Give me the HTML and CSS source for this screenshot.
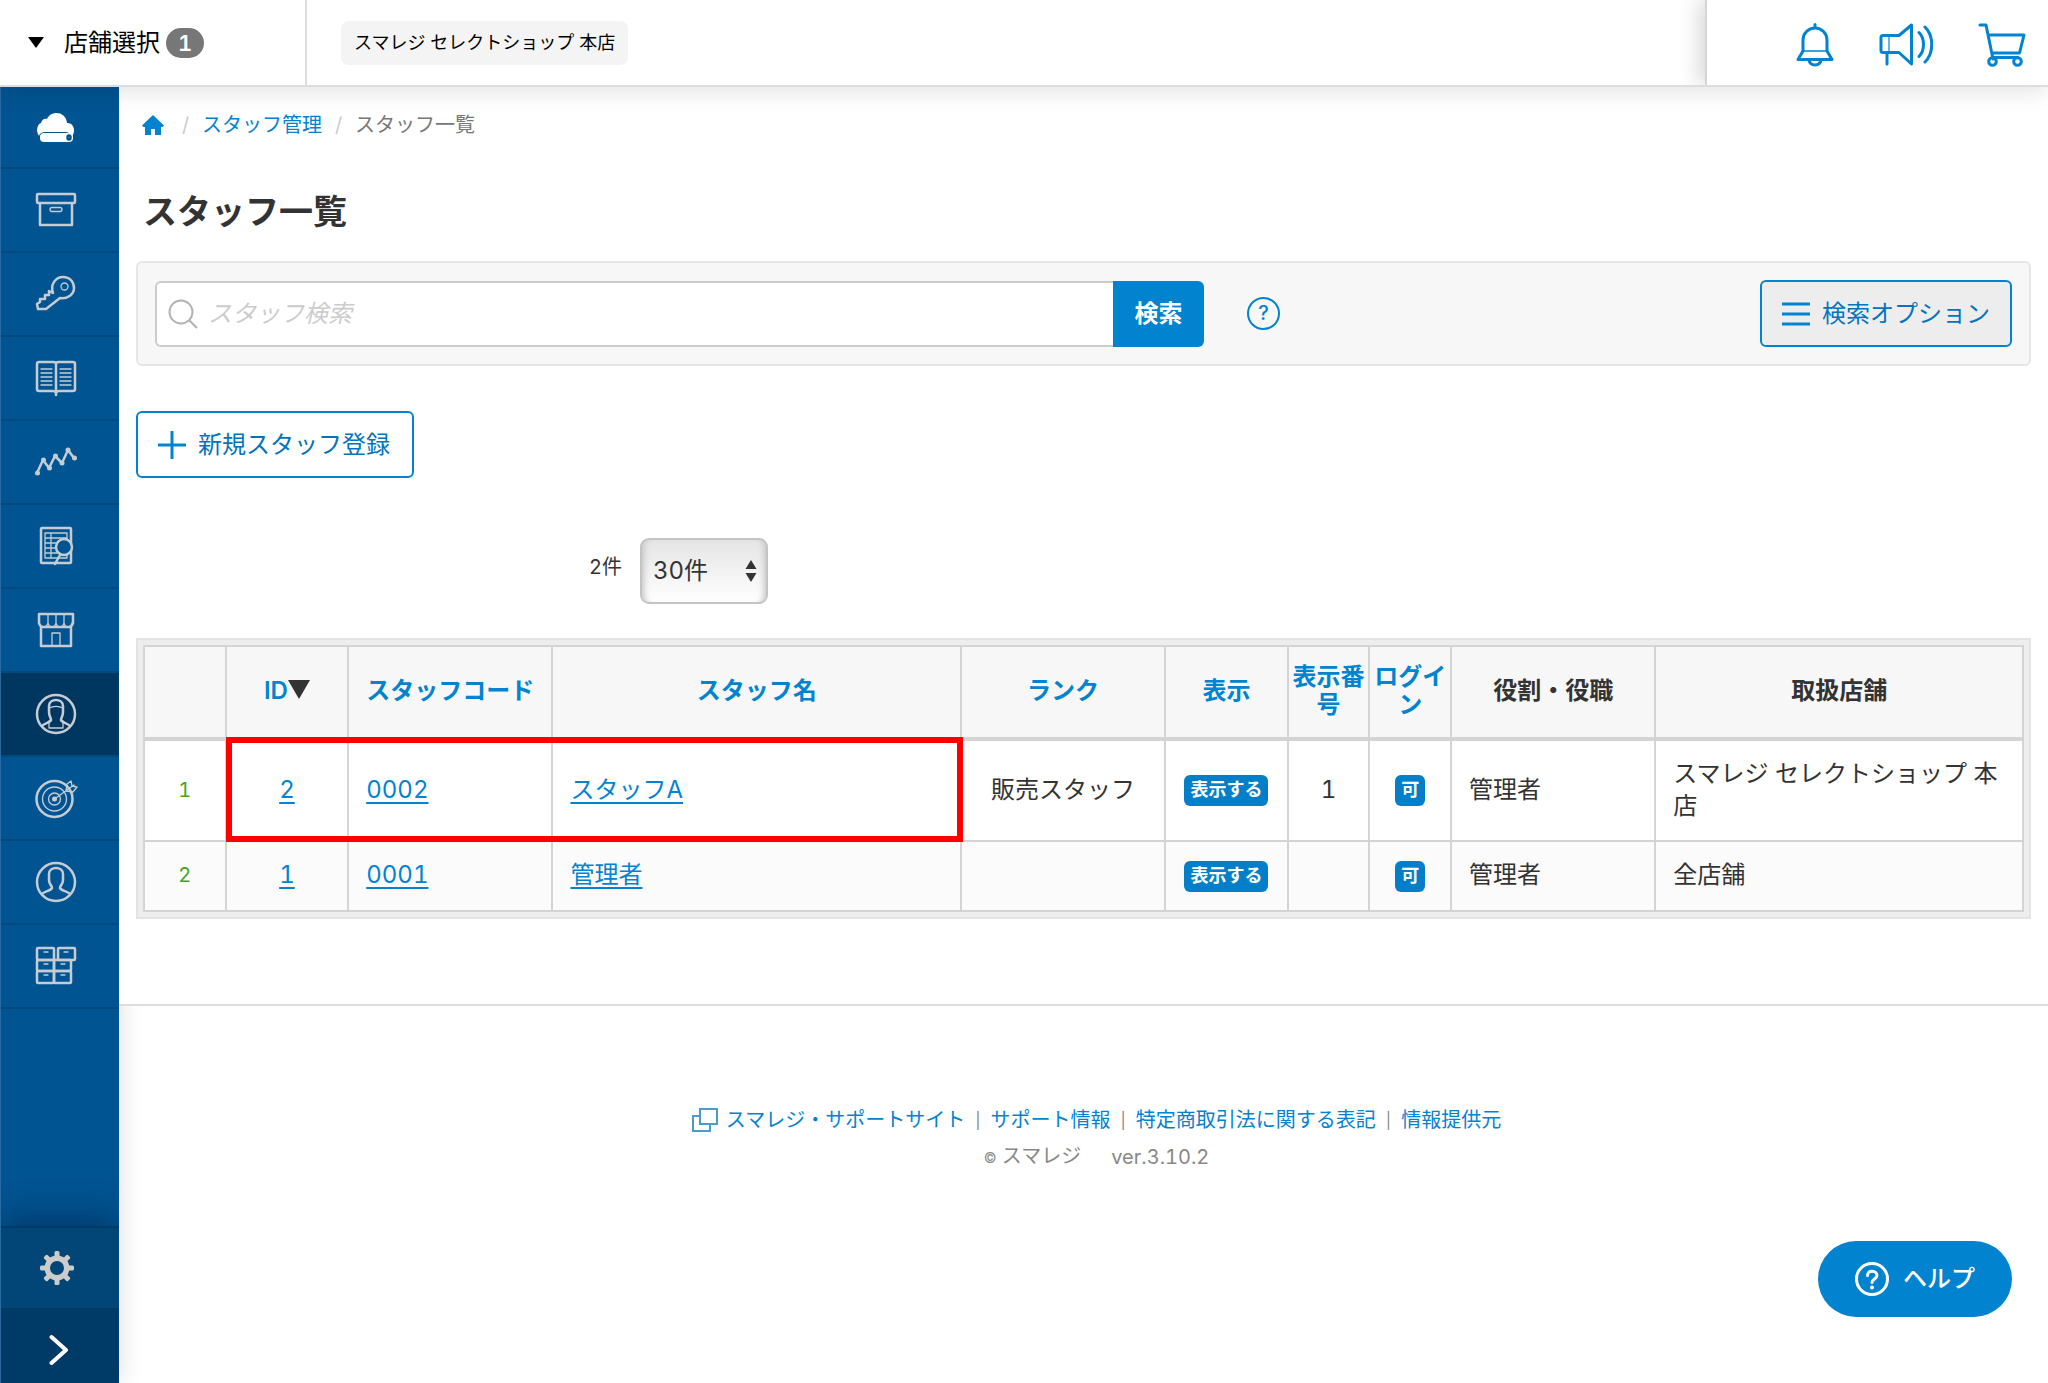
FILE: index.html
```html
<!DOCTYPE html>
<html lang="ja">
<head>
<meta charset="utf-8">
<meta name="viewport" content="width=device-width, initial-scale=1">
<title>スタッフ一覧</title>
<link rel="stylesheet" href="styles.css">
</head>
<body>
<header class="topbar">
  <button class="store-select" type="button"><span class="caret"></span><span>店舗選択</span><span class="count">1</span></button>
  <div class="store-current"><span class="store-chip">スマレジ セレクトショップ 本店</span></div>
  <nav class="top-actions" aria-label="お知らせ">
    <a href="#" aria-label="通知"><svg width="38" height="44" viewBox="0 0 38 44" fill="none" stroke="currentColor" stroke-width="3" stroke-linecap="round" stroke-linejoin="round"><path d="M19 1.500V4M7 28V17a12 12 0 0 1 24 0v11l5 8.500H2z"/><path d="M7 28h24" stroke-width="1.500"/><path d="M13 37c1 6.500 11 6.500 12 0"/></svg></a>
    <a href="#" aria-label="お知らせ"><svg width="54" height="44" viewBox="0 0 54 44" fill="none" stroke="currentColor" stroke-width="3" stroke-linecap="round" stroke-linejoin="round"><path d="M4 12.500h16L32.500 2v39L20 29.500H4q-2 0-2-2v-13q0-2 2-2zM8 30v11"/><path d="M10 13v16" stroke-width="1.200"/><path d="M40 9.500c6 6 6 18 0 24M46 4c9 9 9 26 0 35"/></svg></a>
    <a href="#" aria-label="カート"><svg width="48" height="44" viewBox="0 0 48 44" fill="none" stroke="currentColor" stroke-width="3" stroke-linecap="round" stroke-linejoin="round"><path d="M2 2h6l7 34M11.500 12H46l-4.500 18H14.500M16 34.500h24"/><circle cx="14.500" cy="38.500" r="3.800"/><circle cx="39.500" cy="38.500" r="3.800"/></svg></a>
  </nav>
</header>
<div class="shell">
  <aside class="sidebar">
    <nav class="side-nav" aria-label="メイン">
      <a href="#" aria-label="ホーム" class="home"><svg viewBox="0 0 42 42"><path fill="#fff" d="M4 31C0 25 3 19 6 18c1-4 4-5 6-4 4-9 19-8 20 4 7-1 9 9 5 13-1-3-4-4-7-4H11c-4 0-6 1-7 4z"/><rect x="5" y="28" width="33" height="9" rx="4" fill="#fff"/><ellipse cx="34" cy="32.500" rx="1.500" ry="2" fill="none" stroke="#015492"/></svg></a>
      <a href="#" aria-label="商品"><svg viewBox="0 0 42 42"><rect x="2" y="5" width="38" height="9" rx="1"/><path d="M5 14v22h32V14"/><rect x="15" y="18.500" width="12" height="4" rx="2" stroke-width="1.300"/></svg></a>
      <a href="#" aria-label="鍵"><svg viewBox="0 0 42 42"><path d="M18 20C15 11 21 4 28 4s11 5 11 11-6 11-14 10L11 36H3l-1-5 3-2v-3h5v-4h4v-4z"/><circle cx="29.500" cy="13.500" r="3.500" stroke-width="1.300"/></svg></a>
      <a href="#" aria-label="帳簿"><svg viewBox="0 0 42 42"><path d="M21 6q-1-1-3-1H4q-2 0-2 2v25q0 2 2 2h14q2 0 3 2 1-2 3-2h14q2 0 2-2V7q0-2-2-2H24q-2 0-3 1v32"/><path d="M6 12h11M6 16h11M6 20h11M6 24h11M6 28h11M25 12h11M25 16h11M25 20h11M25 24h11M25 28h11" stroke-width="1.300"/></svg></a>
      <a href="#" aria-label="売上分析"><svg viewBox="0 0 42 42"><path d="M2 32l6-13 6 8 6-12 7 7 6-13 6 8"/><g fill="#c5ccd3" stroke="none"><circle cx="2.500" cy="32" r="2.500"/><circle cx="8.500" cy="19" r="2.500"/><circle cx="14.500" cy="27" r="2.500"/><circle cx="20.500" cy="15" r="2.500"/><circle cx="27" cy="22" r="2.500"/><circle cx="33" cy="9" r="2.500"/><circle cx="39.500" cy="17" r="2.500"/></g></svg></a>
      <a href="#" aria-label="レポート"><svg viewBox="0 0 42 42"><rect x="6" y="3" width="30" height="35" rx="1"/><path d="M10 8h22v25H10zM10 13h22M10 18h15M10 23h14M10 28h14M16 8v25" stroke-width="1.300"/><circle cx="29" cy="22" r="8" fill="#015492"/><path d="M25 30l-5 9"/></svg></a>
      <a href="#" aria-label="店舗"><svg viewBox="0 0 42 42"><path d="M4 5h34v9q-1 4-4 4H8q-3 0-4-4zM6 18v19h30V18"/><path d="M13 5v9q-1 4-5 4M21 5v9q-1 4-4 4t-4-4M29 5v9q-1 4-4 4t-4-4M37 14q-1 4-4 4t-4-4M17 37V24h8v13" stroke-width="1.300"/></svg></a>
      <a href="#" aria-label="スタッフ" class="active" aria-current="page"><svg viewBox="0 0 42 42"><circle cx="21" cy="21" r="19"/><path d="M7 33c2-3 8-3 9-6 0-3-2-3-2-8V13c0-8 14-8 14 0v6c0 5-2 5-2 8 1 3 7 3 9 6"/><path d="M14 15c4-2 10-2 14 0M14 28v7h14v-7" stroke-width="1.300"/></svg></a>
      <a href="#" aria-label="目標"><svg viewBox="0 0 42 42"><circle cx="19.500" cy="22" r="18"/><circle cx="19.500" cy="22" r="12" stroke-width="1.300"/><circle cx="19.500" cy="22" r="6" stroke-width="1.300"/><circle cx="19.500" cy="22" r="2.500" fill="#c5ccd3" stroke="none"/><path d="M19.500 22L39 8M31 14l1-7 4-3 1 5 5 1-4 5z" stroke-width="1.300"/></svg></a>
      <a href="#" aria-label="会員"><svg viewBox="0 0 42 42"><circle cx="21" cy="21" r="19"/><path d="M7 33c2-3 9-3 10-6 0-3-3-3-3-8V13c0-8 14-8 14 0v6c0 5-3 5-3 8 1 3 8 3 10 6"/></svg></a>
      <a href="#" aria-label="在庫"><svg viewBox="0 0 42 42"><rect x="2" y="3" width="17" height="12" rx="1"/><rect x="23" y="3" width="17" height="12" rx="1"/><rect x="2" y="15" width="17" height="11" rx="1"/><rect x="19" y="15" width="17" height="11" rx="1"/><rect x="2" y="26" width="17" height="12" rx="1"/><rect x="19" y="26" width="17" height="12" rx="1"/><path d="M9 7h4M29 7h4M9 19h4M26 19h4M9 30h4M26 30h4" stroke-width="1.300"/></svg></a>
    </nav>
    <div class="side-foot">
      <a href="#" class="gear" aria-label="設定"><svg width="34" height="34" viewBox="-17 -17 34 34"><g fill="#ccc"><rect x="-2.500" y="-17" width="5" height="34" rx="1.500"/><rect x="-2.500" y="-17" width="5" height="34" rx="1.500" transform="rotate(45)"/><rect x="-2.500" y="-17" width="5" height="34" rx="1.500" transform="rotate(90)"/><rect x="-2.500" y="-17" width="5" height="34" rx="1.500" transform="rotate(135)"/><circle r="12.500"/></g><circle r="7" fill="#024678"/></svg></a>
      <button class="expand" type="button" aria-label="メニューを開く"><svg width="20" height="32" viewBox="0 0 20 32" fill="none" stroke="#fff" stroke-width="4" stroke-linecap="round" stroke-linejoin="round"><path d="M2.500 3L17 16 2.500 29"/></svg></button>
    </div>
  </aside>
  <div class="page">
    <main class="content">
      <nav class="breadcrumb" aria-label="パンくず">
        <a href="#" class="crumb-home" aria-label="ホーム"><svg width="24" height="22" viewBox="0 0 24 22"><path fill="currentColor" d="M12 1l11 10.500-1.500 1.500H20v8h-6v-6h-4v6H4v-8H2.500L1 11.500z"/></svg></a>
        <span class="sep">/</span><a href="#">スタッフ管理</a><span class="sep">/</span><span class="here">スタッフ一覧</span>
      </nav>
      <h1>スタッフ一覧</h1>
      <form class="search-panel" role="search">
        <div class="search-group">
          <label class="search-field"><svg width="30" height="30" viewBox="0 0 30 30" fill="none" stroke="#b3b3b3" stroke-width="2" stroke-linecap="round"><circle cx="13" cy="13" r="11.500"/><path d="M21.500 21.500l7 7"/></svg><input type="search" aria-label="スタッフ検索" placeholder="スタッフ検索"></label>
          <button class="search-submit" type="button">検索</button>
        </div>
        <a href="#" class="hint" aria-label="検索のヘルプ">?</a>
        <button class="outline-btn options" type="button"><svg width="28" height="24" viewBox="0 0 28 24" stroke="#0283d0" stroke-width="3"><path d="M0 2h28M0 12h28M0 22h28"/></svg>検索オプション</button>
      </form>
      <button class="outline-btn create" type="button"><svg width="28" height="28" viewBox="0 0 28 28" stroke="#0283d0" stroke-width="3"><path d="M0 14h28M14 0v28"/></svg>新規スタッフ登録</button>
      <div class="pager">
        <label for="per-page">2件</label>
        <span class="select-wrap"><select id="per-page"><option>30件</option></select><svg width="12" height="22" viewBox="0 0 12 22" fill="#333"><path d="M6 0l5.500 9H.5zM6 22l5.500-9H.5z"/></svg></span>
      </div>
      <div class="table-frame">
        <table>
          <colgroup><col class="w4"><col class="w6"><col class="w10"><col class="w20"><col class="w10"><col class="w6"><col class="w4"><col class="w4"><col class="w10"><col class="w18"></colgroup>
          <thead>
            <tr><th></th><th><a href="#">ID</a><span class="sort-mark"></span></th><th><a href="#">スタッフコード</a></th><th><a href="#">スタッフ名</a></th><th><a href="#">ランク</a></th><th><a href="#">表示</a></th><th><a href="#">表示番号</a></th><th><a href="#">ログイン</a></th><th>役割・役職</th><th>取扱店舗</th></tr>
          </thead>
          <tbody>
            <tr><td class="mid num">1</td><td class="mid marked"><a href="#">2</a><span class="highlight"></span></td><td><a href="#">0002</a></td><td><a href="#">スタッフA</a></td><td class="mid">販売スタッフ</td><td class="mid"><span class="tag">表示する</span></td><td class="mid">1</td><td class="mid"><span class="tag">可</span></td><td>管理者</td><td>スマレジ セレクトショップ 本店</td></tr>
            <tr><td class="mid num">2</td><td class="mid"><a href="#">1</a></td><td><a href="#">0001</a></td><td><a href="#">管理者</a></td><td></td><td class="mid"><span class="tag">表示する</span></td><td></td><td class="mid"><span class="tag">可</span></td><td>管理者</td><td>全店舗</td></tr>
          </tbody>
        </table>
      </div>
    </main>
    <footer class="footer">
      <div class="footer-links">
        <a href="#" class="support"><svg width="26" height="24" viewBox="0 0 26 24" fill="none" stroke="#4a9bd1" stroke-width="2"><path d="M8 1h17v15H8zM8 8H1v15h17v-7"/></svg>スマレジ・サポートサイト</a><span class="bar">|</span><a href="#">サポート情報</a><span class="bar">|</span><a href="#">特定商取引法に関する表記</a><span class="bar">|</span><a href="#">情報提供元</a>
      </div>
      <div class="footer-meta"><span><small>©</small> スマレジ</span><span>ver.3.10.2</span></div>
    </footer>
  </div>
</div>
<button class="help" type="button"><svg width="34" height="34" viewBox="0 0 34 34" fill="none" stroke="#fff" stroke-width="3" stroke-linecap="round"><circle cx="17" cy="17" r="15.500"/><path d="M12.500 13.500c0-6 9.500-5.500 9.500 0 0 3.500-5 3.500-5 7"/><circle cx="17" cy="25.500" r="2" fill="#fff" stroke="none"/></svg>ヘルプ</button>
</body>
</html>
```

FILE: styles.css
```css
* { box-sizing: border-box; }

body {
  margin: 0;
  background: #fff;
  color: #333;
  font: 24px/32px Inter, "Noto Sans CJK JP", sans-serif;
  font-variant-numeric: tabular-nums;
}

a { color: #0283d0; text-decoration: none; }
button, input, select { font: inherit; color: inherit; }
button { cursor: pointer; }
svg { flex: none; display: block; }

/* Top bar */
.topbar {
  position: sticky;
  top: 0;
  z-index: 3;
  display: flex;
  height: 85px;
  background: #fff;
  box-shadow: 0 2px 0 #dcdddd, 0 4px 24px rgba(0, 0, 0, .14);
  color: #000;
}
.store-select {
  display: flex;
  align-items: center;
  width: 307px;
  padding: 0 28px;
  border: 0;
  border-right: 2px solid #dcdddd;
  background: none;
}
.caret {
  margin-right: 20px;
  border: 8px solid transparent;
  border-top: 11px solid #000;
  border-bottom: 0;
}
.count {
  width: 38px;
  margin-left: 6px;
  border-radius: 15px;
  background: #777;
  color: #fff;
  font-size: 22px;
  font-weight: 600;
  line-height: 30px;
}
.store-current { display: flex; flex: 1; align-items: center; padding: 0 34px; }
.store-chip {
  padding: 6px 13px;
  border-radius: 8px;
  background: #f4f4f4;
  font-size: 18px;
}
.top-actions {
  display: flex;
  align-items: center;
  justify-content: flex-end;
  gap: 45px;
  width: 343px;
  padding: 4px 22px 0 0;
  border-left: 2px solid #d5d5d5;
  box-shadow: -6px 0 20px rgba(0, 0, 0, .16);
  clip-path: inset(0 0 0 -30px);
}

/* Sidebar */
.shell { display: flex; min-height: calc(100vh - 85px); }
.sidebar {
  position: sticky;
  top: 85px;
  display: flex;
  flex: none;
  flex-direction: column;
  justify-content: space-between;
  width: 119px;
  height: calc(100vh - 85px);
  border-left: 1px solid #2a6a9f;
  background: #015492;
  box-shadow: 0 0 24px rgba(0, 0, 0, .14);
}
.side-nav a {
  display: flex;
  align-items: center;
  justify-content: center;
  height: 84px;
  padding-right: 9px;
  border-bottom: 2px solid #014a80;
}
.side-nav svg {
  width: 42px;
  height: 42px;
  overflow: visible;
  fill: none;
  stroke: #c5ccd3;
  stroke-width: 2.5;
  stroke-linejoin: round;
  stroke-linecap: round;
}
.side-nav .home svg { stroke: none; }
.side-nav .active { background: #003760; }
.side-foot {
  box-shadow: 0 -8px 32px rgba(0, 20, 45, .42);
  clip-path: inset(-48px 0 0 0);
}
.gear {
  display: flex;
  align-items: center;
  justify-content: center;
  height: 82px;
  padding-right: 6px;
  border-top: 2px solid #013b65;
  background: #024678;
}
.expand {
  display: flex;
  align-items: center;
  justify-content: center;
  width: 100%;
  height: 75px;
  padding: 9px 2px 0 0;
  border: 0;
  background: #003b67;
}

/* Page */
.page { display: flex; flex: 1; flex-direction: column; min-width: 0; }
.content {
  z-index: 1;
  padding: 24px 17px 85px;
  border-bottom: 2px solid #dcdddd;
  background: #fff;
}
.breadcrumb { display: flex; align-items: center; padding-left: 5px; font-size: 20px; }
.crumb-home { margin-right: 4px; }
.sep { width: 33px; color: #ccc; text-align: center; }
.here { color: #777; }
h1 { margin: 44px 0 22px 7px; font-size: 34px; line-height: 54px; }

.search-panel {
  display: flex;
  align-items: center;
  padding: 17px;
  border: 2px solid #e6e6e6;
  border-radius: 6px;
  background: #f7f7f7;
}
.search-group { display: flex; flex: 0 1 1049px; height: 66px; }
.search-field {
  display: flex;
  flex: 1;
  align-items: center;
  gap: 10px;
  padding: 0 11px;
  border: 2px solid #ccc;
  border-right: 0;
  border-radius: 6px 0 0 6px;
  background: #fff;
}
.search-field input { flex: 1; min-width: 0; padding: 0; border: 0; outline: 0; background: none; }
.search-field input::placeholder { color: #ccc; font-style: italic; }
.search-submit {
  width: 91px;
  border: 0;
  border-radius: 0 6px 6px 0;
  background: #0283d0;
  color: #fff;
  font-weight: 600;
}
.hint {
  width: 33px;
  margin-left: 43px;
  border: 2px solid #0283d0;
  border-radius: 50%;
  font-size: 20px;
  font-weight: 500;
  line-height: 29px;
  text-align: center;
}
.outline-btn {
  display: flex;
  align-items: center;
  gap: 12px;
  height: 67px;
  padding: 0 20px;
  border: 2px solid #0283d0;
  border-radius: 6px;
  background: #fff;
  color: #0273bd;
}
.options { margin-left: auto; background: #ededed; }
.create { margin-top: 45px; padding: 0 22px 0 20px; }

.pager {
  display: flex;
  align-items: center;
  gap: 18px;
  margin: 60px 0 34px 453px;
  font-size: 20px;
}
.pager label { padding-bottom: 8px; }
.select-wrap { position: relative; }
.select-wrap select {
  display: block;
  width: 128px;
  height: 66px;
  padding: 0 11px;
  border: 2px solid #c4c4c4;
  border-radius: 9px;
  appearance: none;
  background: linear-gradient(#e5e5e5, #fff);
  box-shadow: inset 7px 0 6px -5px #c4c4c4, inset -7px 0 6px -5px #c4c4c4;
  font-size: 24px;
}
.select-wrap svg { position: absolute; top: 22px; right: 11px; pointer-events: none; }

/* Staff table */
.table-frame { padding: 5px; border: 2px solid #e4e4e4; background: #ededed; }
table { width: 100%; border-collapse: collapse; table-layout: fixed; background: #fff; }
.w4 { width: 4%; }
.w6 { width: 6%; }
.w10 { width: 10%; }
.w18 { width: 18%; }
.w20 { width: 20%; }
th, td { border: 2px solid #d4d4d4; }
th {
  height: 93px;
  padding: 0 3px 2px;
  border-bottom-width: 4px;
  background: #f7f7f7;
  line-height: 28px;
  font-weight: 600;
}
td { padding: 17px 17px 18px; text-align: left; }
td a { text-decoration: underline; text-decoration-thickness: 2px; text-underline-offset: 4px; }
tbody tr:nth-child(even) { background: #fbfbfb; }
.mid { padding: 17px 4px 18px; text-align: center; }
.num { color: #45a51d; font-size: 20px; }
.sort-mark {
  display: inline-block;
  border: 11px solid transparent;
  border-top: 19px solid #333;
  border-bottom: 0;
}
.tag {
  display: inline-block;
  padding: 0 6px 2px;
  border-radius: 6px;
  background: #027fc8;
  color: #fff;
  font-size: 18px;
  font-weight: 600;
  line-height: 29px;
  vertical-align: middle;
}
.marked { position: relative; }
.highlight {
  position: absolute;
  top: -4px;
  bottom: -2px;
  left: -1px;
  width: calc(600% + 14px);
  border: 6px solid #f00;
  pointer-events: none;
}

/* Footer */
.footer { padding: 98px 0 60px 26px; color: #888; font-size: 20px; }
.footer-links, .footer-meta { display: flex; align-items: center; justify-content: center; }
.footer-links { gap: 10px; }
.support { display: flex; align-items: center; gap: 8px; }
.bar { font-size: 16px; }
.footer-meta { gap: 30px; margin-top: 4px; }
.footer-meta small { font-size: 14px; }

.help {
  position: fixed;
  right: 36px;
  bottom: 66px;
  z-index: 4;
  display: flex;
  align-items: center;
  justify-content: center;
  gap: 14px;
  width: 194px;
  height: 76px;
  border: 0;
  border-radius: 38px;
  background: #0283d0;
  color: #fff;
  font-weight: 500;
}
```
